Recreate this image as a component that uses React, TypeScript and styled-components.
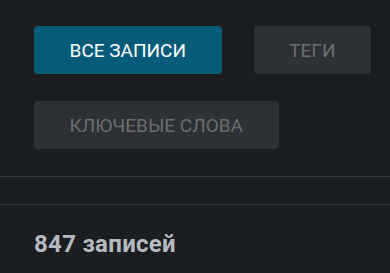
import React from "react";
import styled, { createGlobalStyle } from "styled-components";

const Global = createGlobalStyle`
  html, body { margin: 0; padding: 0; background: #1b1e21; }
  body { font-family: Roboto, "Noto Sans", sans-serif; }
`;

const Page = styled.div`
  width: 390px;
  height: 273px;
  background: #1b1e21;
  overflow: hidden;
`;

const Filters = styled.div`
  display: flex;
  flex-wrap: wrap;
  gap: 27px 32px;
  padding: 26px 10px 27px 34px;
  border-bottom: 1px solid #3a3d40;
`;

const FilterButton = styled.button<{ $active?: boolean }>`
  height: 48px;
  padding: 0 35.6px;
  border: none;
  border-radius: 4px;
  background: ${(p) => (p.$active ? "#065b78" : "#2d3135")};
  color: ${(p) => (p.$active ? "#ffffff" : "#6b6e70")};
  font-family: Roboto, sans-serif;
  font-size: 19px;
  font-weight: 400;
  text-transform: uppercase;
  white-space: nowrap;
  cursor: pointer;
`;

const Spacer = styled.div`
  height: 27px;
  border-bottom: 1px solid #3a3d40;
`;

const Count = styled.div`
  padding: 25px 34px 0;
  color: #b5bac0;
  font-family: Roboto, sans-serif;
  font-size: 24px;
  font-weight: 700;
  letter-spacing: 0.3px;
`;

export default function App() {
  return (
    <Page>
      <Global />
      <Filters>
        <FilterButton $active>Все записи</FilterButton>
        <FilterButton>Теги</FilterButton>
        <FilterButton>Ключевые слова</FilterButton>
      </Filters>
      <Spacer />
      <Count>847 записей</Count>
    </Page>
  );
}
